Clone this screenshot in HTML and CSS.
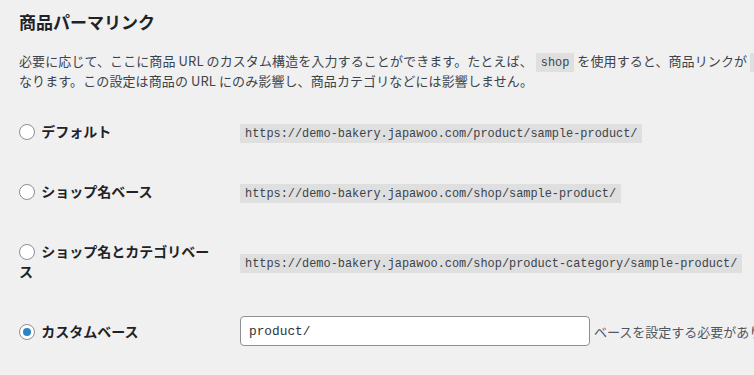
FILE: index.html
```html
<!DOCTYPE html>
<html lang="ja">
<head>
    <meta charset="UTF-8">
    <meta name="viewport" content="width=device-width, initial-scale=1.0">
    <title>商品パーマリンク</title>
    <link rel="stylesheet" href="styles.css">
</head>
<body>
    <div class="wrap">
        <h2>商品パーマリンク</h2>
        <p class="intro">必要に応じて、ここに商品 URL のカスタム構造を入力することができます。たとえば、 <code>shop</code> を使用すると、商品リンクが <code>https://demo-bakery.japawoo.com/shop/sample-product/</code> のように<br>なります。この設定は商品の URL にのみ影響し、商品カテゴリなどには影響しません。</p>

        <table class="form-table">
            <tr>
                <th><label><input type="radio" name="product_base"> デフォルト</label></th>
                <td><code>https://demo-bakery.japawoo.com/product/sample-product/</code></td>
            </tr>
            <tr>
                <th><label><input type="radio" name="product_base"> ショップ名ベース</label></th>
                <td><code>https://demo-bakery.japawoo.com/shop/sample-product/</code></td>
            </tr>
            <tr>
                <th><label><input type="radio" name="product_base"> ショップ名とカテゴリベース</label></th>
                <td><code>https://demo-bakery.japawoo.com/shop/product-category/sample-product/</code></td>
            </tr>
            <tr>
                <th><label><input type="radio" name="product_base" checked> カスタムベース</label></th>
                <td>
                    <input type="text" class="regular-text" value="product/">
                    <span class="description">ベースを設定する必要があります。カスタムベースを使用する場合は、ここに入力してください。</span>
                </td>
            </tr>
        </table>
    </div>
</body>
</html>
```

FILE: styles.css
```css
html, body {
    overflow: hidden;
}
body {
    margin: 0;
    background: #f0f0f1;
    color: #3c434a;
    font-family: "Noto Sans CJK JP", "Noto Sans", sans-serif;
    font-size: 13px;
}
.wrap {
    padding-left: 19px;
}
h2 {
    margin: 11px 0 0 0;
    font-size: 17px;
    line-height: 22px;
    font-weight: 700;
    color: #1d2327;
}
.intro {
    margin: 19px 0 0 0;
    line-height: 18px;
    white-space: nowrap;
    letter-spacing: 0.1px;
}
code {
    font-family: "Liberation Mono", "DejaVu Sans Mono", monospace;
    font-size: 11.9px;
    letter-spacing: 0;
    background: rgba(0,0,0,0.07);
    padding: 3px 5px 2px 5px;
    color: #3c434a;
}
.form-table {
    width: 1100px;
    margin-top: 11px;
    border-collapse: collapse;
    table-layout: fixed;
}
.form-table th {
    width: 201px;
    padding: 20px 10px 20px 0;
    text-align: left;
    vertical-align: top;
    font-size: 14px;
    line-height: 20px;
    font-weight: 700;
    color: #1d2327;
}
.form-table td {
    padding: 15px 10px;
    vertical-align: middle;
    white-space: nowrap;
}
input[type="radio"] {
    appearance: none;
    width: 16px;
    height: 16px;
    margin: 0 3px 0 0;
    border: 1px solid #8c8f94;
    border-radius: 50%;
    background: #fff;
    vertical-align: -3px;
    position: relative;
}
input[type="radio"]:checked::before {
    content: "";
    position: absolute;
    left: 3px;
    top: 3px;
    width: 8px;
    height: 8px;
    border-radius: 50%;
    background: #2a84c6;
}
.regular-text {
    box-sizing: border-box;
    width: 350px;
    height: 30px;
    margin: 0;
    padding: 0 8px;
    border: 1px solid #8c8f94;
    border-radius: 4px;
    background: #fff;
    color: #2c3338;
    font-family: "Liberation Mono", "DejaVu Sans Mono", monospace;
    font-size: 12.8px;
    vertical-align: middle;
}
.description {
    margin-left: 1px;
    color: #50575e;
    vertical-align: middle;
}
```
